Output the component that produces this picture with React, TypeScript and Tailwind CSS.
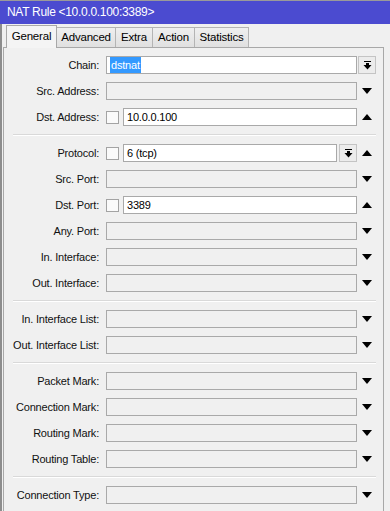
import React from 'react';

const font = { fontFamily: '"Liberation Sans", Arial, sans-serif' };

function DownArrow() {
  return (
    <svg width="10" height="6" viewBox="0 0 10 6">
      <path d="M0 0h10L5 6z" fill="#000" />
    </svg>
  );
}

function UpArrow() {
  return (
    <svg width="10" height="6" viewBox="0 0 10 6">
      <path d="M0 6h10L5 0z" fill="#000" />
    </svg>
  );
}

function DropButton() {
  return (
    <div className="flex h-[18px] w-[18px] shrink-0 items-center justify-center border border-[#c4c4c4] bg-[#ececec]">
      <svg width="9" height="9" viewBox="0 0 9 9">
        <rect x="1" y="0" width="7" height="1" fill="#000" />
        <rect x="3" y="2" width="3" height="2" fill="#000" />
        <path d="M0.5 4h8L4.5 8.5z" fill="#000" />
      </svg>
    </div>
  );
}

type RowProps = {
  label: string;
  value?: string;
  check?: boolean;
  selected?: boolean;
  combo?: boolean;
  slot?: 'up' | 'down' | 'button' | 'none';
};

function Row({ label, value, check, selected, combo, slot = 'down' }: RowProps) {
  const filled = value !== undefined;
  return (
    <div className="flex h-[18px] items-center">
      <div className="w-[96px] shrink-0 whitespace-nowrap pr-px text-right text-[11px] tracking-[-0.2px] text-[#111]">
        {label}:
      </div>
      <div className="ml-[6px] flex h-full flex-1 items-center">
        {check && <div className="mr-[4px] h-[13px] w-[13px] shrink-0 border border-[#a3a3a3] bg-[#fafafa]" />}
        <div
          className={`flex h-full flex-1 items-center border border-[#a9a9a9] pl-[3px] text-[11px] tracking-[-0.2px] ${
            filled ? 'bg-white' : 'bg-[#f0f0f0]'
          }`}
        >
          {selected ? <span className="bg-[#3399ff] px-px text-white">{value}</span> : value}
        </div>
        {combo && (
          <div className="ml-[2px]">
            <DropButton />
          </div>
        )}
      </div>
      <div className="flex w-[19px] shrink-0 items-center justify-center">
        {slot === 'down' && <DownArrow />}
        {slot === 'up' && <UpArrow />}
        {slot === 'button' && (
          <div className="ml-[1px]">
            <DropButton />
          </div>
        )}
      </div>
    </div>
  );
}

function Separator() {
  return <div className="mb-[8px] ml-[9px] mt-[8px] border-b border-t border-b-white border-t-[#d9d9d9]" />;
}

const tabs = ['General', 'Advanced', 'Extra', 'Action', 'Statistics'];

export default function App() {
  return (
    <div className="h-[511px] w-[390px] overflow-hidden bg-[#f0f0f0]" style={font}>
      <div className="border-t border-t-[#9a9a9a] bg-[#4b4bd0] pl-[7px] text-[12px] leading-[23px] tracking-[-0.3px] text-white">
        NAT Rule &lt;10.0.0.100:3389&gt;
      </div>
      <div className="flex border-l-2 border-l-[#8d8d8d]">
        <div className="flex-1">
          <div className="flex h-[23px] items-end pl-[4px]">
            {tabs.map((t, i) =>
              i === 0 ? (
                <div
                  key={t}
                  className="relative -mb-px flex h-[23px] w-[51px] items-center justify-center border border-b-0 border-[#a8a8a8] bg-[#f4f4f4] text-[11.5px] tracking-[-0.2px]"
                >
                  {t}
                </div>
              ) : (
                <div
                  key={t}
                  className={`flex h-[20px] items-center justify-center border border-l-0 border-b-0 border-[#b4b4b4] bg-gradient-to-b from-[#efefef] to-[#e0e0e0] text-[11.5px] tracking-[-0.2px] ${
                    i === 1 ? 'w-[59px]' : i === 2 ? 'w-[37px]' : i === 3 ? 'w-[42px]' : 'w-[54px]'
                  }`}
                >
                  {t}
                </div>
              ),
            )}
          </div>
          <div className="ml-px mr-[6px] h-[470px] border border-[#a8a8a8] bg-[#f0f0f0] pr-[7px] pt-[8px]">
            <div className="flex flex-col gap-[8px]">
              <Row label="Chain" value="dstnat" selected slot="button" />
              <Row label="Src. Address" />
              <Row label="Dst. Address" value="10.0.0.100" check slot="up" />
            </div>
            <Separator />
            <div className="flex flex-col gap-[8px]">
              <Row label="Protocol" value="6 (tcp)" check combo slot="up" />
              <Row label="Src. Port" />
              <Row label="Dst. Port" value="3389" check slot="up" />
              <Row label="Any. Port" />
              <Row label="In. Interface" />
              <Row label="Out. Interface" />
            </div>
            <Separator />
            <div className="flex flex-col gap-[8px]">
              <Row label="In. Interface List" />
              <Row label="Out. Interface List" />
            </div>
            <Separator />
            <div className="flex flex-col gap-[8px]">
              <Row label="Packet Mark" />
              <Row label="Connection Mark" />
              <Row label="Routing Mark" />
              <Row label="Routing Table" />
            </div>
            <Separator />
            <Row label="Connection Type" />
          </div>
        </div>
      </div>
    </div>
  );
}
